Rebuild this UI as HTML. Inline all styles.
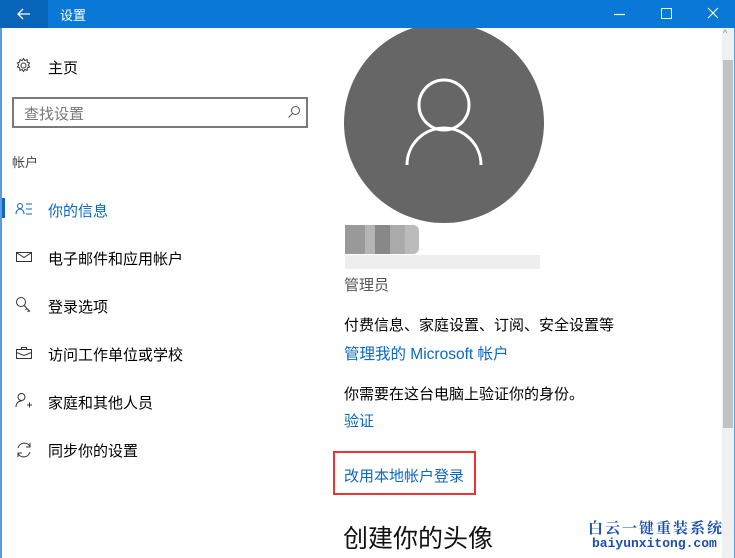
<!DOCTYPE html>
<html><head><meta charset="utf-8"><style>
*{margin:0;padding:0;box-sizing:border-box}
body{width:735px;height:558px;overflow:hidden;background:#fff;font-family:"Liberation Sans","Noto Sans CJK SC",sans-serif;position:relative;color:#000}
.t{position:absolute;white-space:nowrap;font-size:15px}
.bar{position:absolute;left:0;top:0;width:735px;height:28px;background:#0a78d7}
.back{position:absolute;left:0;top:0;width:48px;height:28px;background:#0864b8}
.link{color:#0a68bf}
.ico{position:absolute}
</style></head><body>
<div class="bar"></div><div class="back"></div>
<svg class="ico" style="left:16px;top:6px" width="16" height="16" viewBox="0 0 16 16"><path d="M14 8H2M7 3L2 8l5 5" stroke="#fff" stroke-width="1.3" fill="none"/></svg>
<div class="t" style="left:60px;top:5px;color:#fff;font-size:13px">设置</div>
<svg class="ico" style="left:610px;top:6px" width="120" height="16" viewBox="0 0 120 16"><path d="M4 8.5h11" stroke="#fff" stroke-width="1.2"/><rect x="51.5" y="2.5" width="10" height="10" stroke="#fff" fill="none"/><path d="M98 2l10 10M108 2L98 12" stroke="#fff" stroke-width="1.1"/></svg>
<div style="position:absolute;left:0;top:28px;width:2px;height:530px;background:#5a9ae0"></div>
<div style="position:absolute;left:733px;top:28px;width:2px;height:530px;background:#5a9ae0"></div>
<div style="position:absolute;left:722px;top:28px;width:12px;height:530px;background:#f0f0f0"></div>
<div style="position:absolute;left:723px;top:60px;width:10px;height:368px;background:#c2c2c2"></div>
<div class="t" style="left:723px;top:28px;font-size:9px;color:#888">^</div>

<svg class="ico" style="left:15px;top:57px" width="17" height="17" viewBox="0 0 17 17"><circle cx="8.5" cy="8.5" r="2.5" fill="none" stroke="#333"/><path d="M8.5 1.5l1.3 2 2.3-.8.2 2.4 2.3.9-1.3 2 1.3 2-2.3.9-.2 2.4-2.3-.8-1.3 2-1.3-2-2.3.8-.2-2.4-2.3-.9 1.3-2-1.3-2 2.3-.9.2-2.4 2.3.8z" fill="none" stroke="#333" stroke-width="1"/></svg>
<div class="t" style="left:48px;top:57px">主页</div>
<div style="position:absolute;left:12px;top:97px;width:296px;height:31px;border:2px solid #7a7a7a"></div>
<div class="t" style="left:24px;top:103px;color:#777">查找设置</div>
<svg class="ico" style="left:287px;top:105px" width="14" height="14" viewBox="0 0 14 14"><circle cx="8.5" cy="5.5" r="4" fill="none" stroke="#555"/><path d="M5.5 8.5L1.5 12.5" stroke="#555"/></svg>
<div class="t" style="left:12px;top:152px;font-size:13px;color:#444">帐户</div>
<div style="position:absolute;left:2px;top:198px;width:3px;height:20px;background:#0a68bf"></div>
<svg class="ico" style="left:15px;top:202px" width="18" height="14" viewBox="0 0 18 14"><circle cx="5" cy="4" r="2.5" fill="none" stroke="#0a68bf"/><path d="M1 12c0-3 2-5 4-5s4 2 4 5M11 2h6M11 7h6M11 12h6" fill="none" stroke="#0a68bf"/></svg>
<div class="t link" style="left:48px;top:200px">你的信息</div>
<svg class="ico" style="left:15px;top:250px" width="18" height="14" viewBox="0 0 18 14"><rect x="1.5" y="2.5" width="15" height="9" fill="none" stroke="#333"/><path d="M1.5 2.5l7.5 5 7.5-5" fill="none" stroke="#333"/></svg>
<div class="t" style="left:48px;top:248px">电子邮件和应用帐户</div>
<svg class="ico" style="left:15px;top:296px" width="18" height="18" viewBox="0 0 18 18"><circle cx="6" cy="6" r="4.5" fill="none" stroke="#333"/><path d="M9 9.5l6 6M12 12.5l-1.5 1.5M14 14.5l-1.5 1.5" stroke="#333" fill="none"/></svg>
<div class="t" style="left:48px;top:296px">登录选项</div>
<svg class="ico" style="left:15px;top:345px" width="18" height="16" viewBox="0 0 18 16"><rect x="1.5" y="4.5" width="15" height="9" fill="none" stroke="#333"/><path d="M6.5 4.5v-2h5v2M1.5 7.5l7.5 3 7.5-3" fill="none" stroke="#333"/></svg>
<div class="t" style="left:48px;top:344px">访问工作单位或学校</div>
<svg class="ico" style="left:15px;top:392px" width="18" height="18" viewBox="0 0 18 18"><circle cx="6.5" cy="5" r="3.5" fill="none" stroke="#333"/><path d="M1 15c0-4 2.5-6 5.5-6M12 13h5M14.5 10.5v5" fill="none" stroke="#333"/></svg>
<div class="t" style="left:48px;top:392px">家庭和其他人员</div>
<svg class="ico" style="left:15px;top:441px" width="18" height="18" viewBox="0 0 18 18"><path d="M3 7a6.5 6.5 0 0 1 12-1.5M15 11a6.5 6.5 0 0 1-12 1.5M15 2v4h-4M3 16v-4h4" fill="none" stroke="#333"/></svg>
<div class="t" style="left:48px;top:440px">同步你的设置</div>

<svg class="ico" style="left:344px;top:28px" width="200" height="196" viewBox="344 28 200 196"><circle cx="444" cy="123" r="100" fill="#666"/><circle cx="444" cy="105" r="25" fill="none" stroke="#fff" stroke-width="3"/><path d="M407 165a37 37 0 0 1 74 0" fill="none" stroke="#fff" stroke-width="3"/></svg>
<div style="position:absolute;left:345px;top:225px;width:74px;height:29px;background:linear-gradient(90deg,#999 0 20px,#b5b5b5 20px 30px,#888 30px 45px,#aaa 45px 60px,#bbb 60px);border-radius:0 6px 6px 0"></div>
<div style="position:absolute;left:345px;top:255px;width:195px;height:14px;background:#eee"></div>
<div class="t" style="left:344px;top:274px;color:#555;font-size:15px">管理员</div>
<div class="t" style="left:344px;top:314px;font-size:15px">付费信息、家庭设置、订阅、安全设置等</div>
<div class="t link" style="left:344px;top:342px;font-size:15.5px">管理我的 Microsoft 帐户</div>
<div class="t" style="left:344px;top:383px;font-size:15px">你需要在这台电脑上验证你的身份。</div>
<div class="t link" style="left:344px;top:410px;font-size:15px">验证</div>
<div style="position:absolute;left:333px;top:451px;width:143px;height:44px;border:2px solid #e33"></div>
<div class="t link" style="left:344px;top:465px;font-size:15px">改用本地帐户登录</div>
<div class="t" style="left:343px;top:519px;font-size:25px;color:#111">创建你的头像</div>
<div class="t" style="left:588px;top:517px;font-size:15px;color:#1a4fb0;font-weight:bold;font-family:'Noto Serif CJK SC',serif;letter-spacing:2px">白云一键重装系统</div>
<div class="t" style="left:592px;top:536px;font-size:13px;color:#1a4fb0;font-family:'Liberation Mono',monospace;font-weight:bold">baiyunxitong.com</div>
</body></html>
